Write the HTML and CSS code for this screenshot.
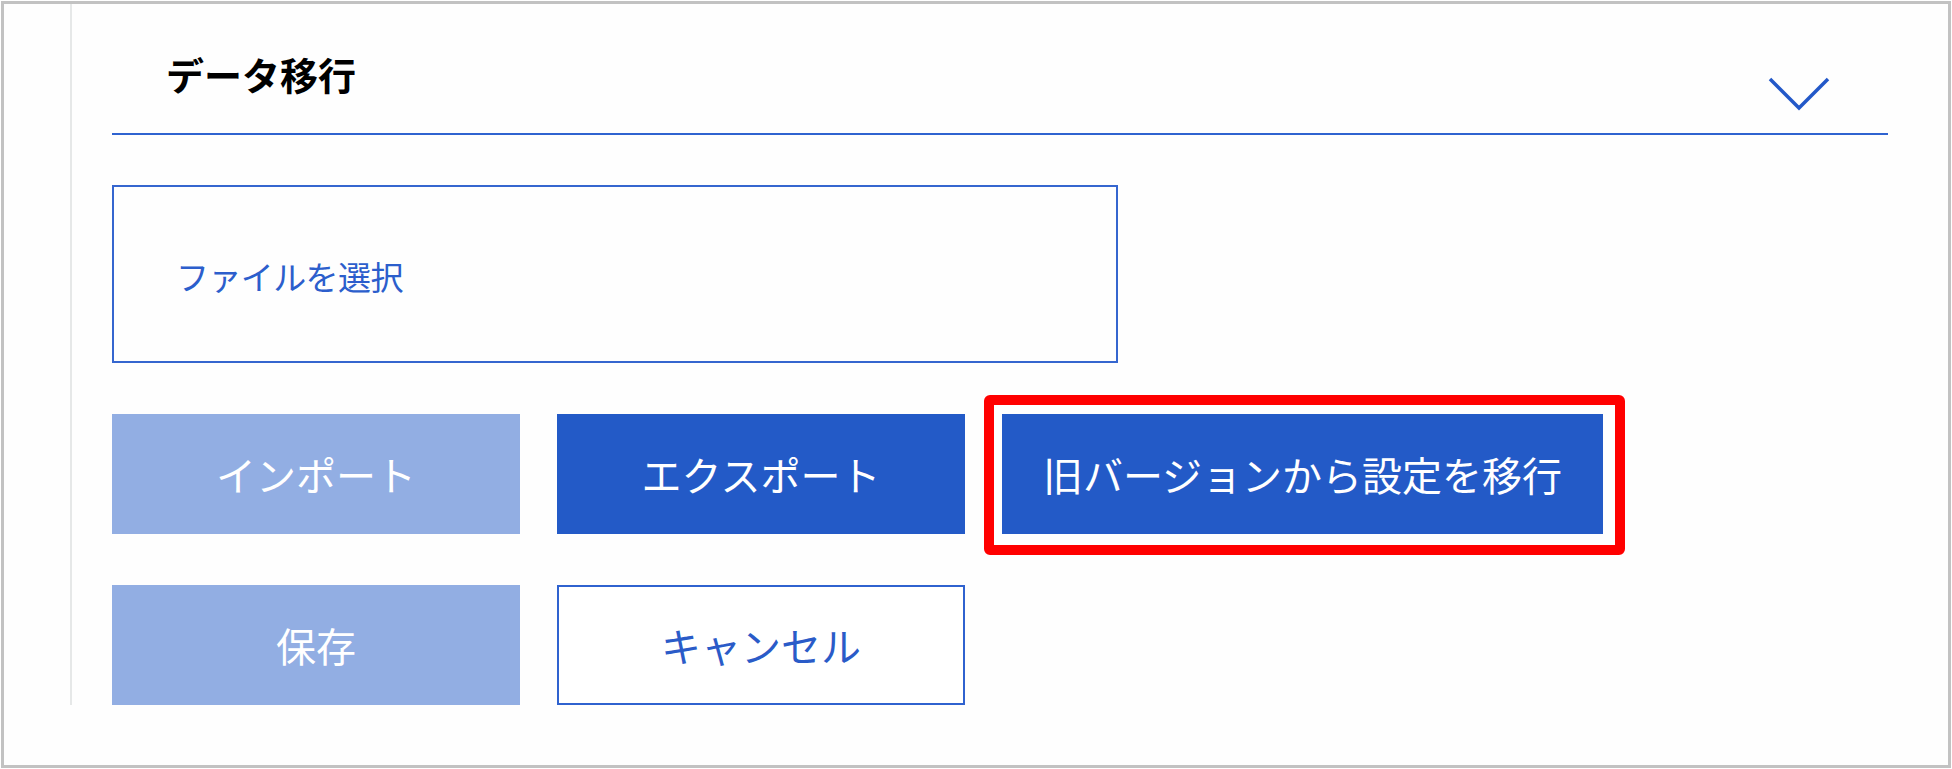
FILE: index.html
```html
<!DOCTYPE html>
<html lang="ja">
<head>
<meta charset="utf-8">
<title>データ移行</title>
<link rel="stylesheet" href="styles.css">
</head>
<body>
<div class="frame">
  <section class="panel">
    <header class="panel-header">
      <h2 class="panel-title">データ移行</h2>
      <svg class="chevron" width="62" height="34" viewBox="0 0 62 34" aria-hidden="true">
        <polyline points="2,2 31,31 60,2" fill="none" stroke="#2358c8" stroke-width="3.5"/>
      </svg>
    </header>
    <div class="file-box">
      <span class="file-label">ファイルを選択</span>
    </div>
    <div class="btn-row">
      <button class="btn btn-disabled">インポート</button>
      <button class="btn btn-primary">エクスポート</button>
      <div class="highlight">
        <button class="btn btn-primary btn-wide">旧バージョンから設定を移行</button>
      </div>
    </div>
    <div class="btn-row btn-row-last">
      <button class="btn btn-disabled">保存</button>
      <button class="btn btn-outline">キャンセル</button>
    </div>
  </section>
</div>
</body>
</html>
```

FILE: styles.css
```css
html, body {
  margin: 0;
  padding: 0;
  background: #ffffff;
}

body {
  width: 1952px;
  height: 769px;
  overflow: hidden;
  font-family: "Noto Sans CJK JP", "Noto Sans", sans-serif;
}

.frame {
  box-sizing: border-box;
  margin: 1px 0 0 1px;
  width: 1950px;
  height: 767px;
  border: 3px solid #c2c2c2;
  background: #fefefe;
}

.panel {
  box-sizing: border-box;
  margin-left: 66px;
  padding: 0 60px 0 40px;
  border-left: 2px solid #e6e8e8;
  display: flex;
  flex-direction: column;
  height: 701px;
}

.panel-header {
  box-sizing: border-box;
  height: 131px;
  border-bottom: 2px solid #2f63d0;
  display: flex;
  justify-content: space-between;
  align-items: flex-start;
  padding: 0 58px 0 54px;
}

.panel-title {
  margin: 51px 0 0 0;
  font-size: 38px;
  line-height: 38px;
  font-weight: 700;
  color: #000000;
}

.chevron {
  display: block;
  margin-top: 73px;
}

.file-box {
  box-sizing: border-box;
  margin-top: 50px;
  width: 1006px;
  height: 178px;
  border: 2px solid #3566cf;
  display: flex;
  align-items: center;
  padding-left: 62px;
  padding-top: 4px;
}

.file-label {
  font-size: 33px;
  line-height: 1;
  color: #2c5ecc;
  letter-spacing: -0.6px;
}

.btn-row {
  display: flex;
  gap: 37px;
  margin-top: 51px;
}

.btn-row-last {
  margin-top: 51px;
}

.btn {
  box-sizing: border-box;
  width: 408px;
  height: 120px;
  margin: 0;
  padding: 0;
  border: none;
  font-family: inherit;
  font-size: 40px;
  line-height: 1;
  color: #ffffff;
  display: flex;
  align-items: center;
  justify-content: center;
}

.btn-disabled {
  background: #92aee3;
}

.btn-primary {
  background: #235ac7;
}

.btn-outline {
  background: #ffffff;
  border: 2px solid #2f62cf;
  color: #2a5bc8;
}

.btn-wide {
  width: 601px;
}

.highlight {
  position: relative;
}

.highlight::after {
  content: "";
  position: absolute;
  top: -19px;
  left: -18px;
  right: -22px;
  bottom: -21px;
  border: 10px solid #ff0000;
  border-radius: 6px;
  pointer-events: none;
}
```
